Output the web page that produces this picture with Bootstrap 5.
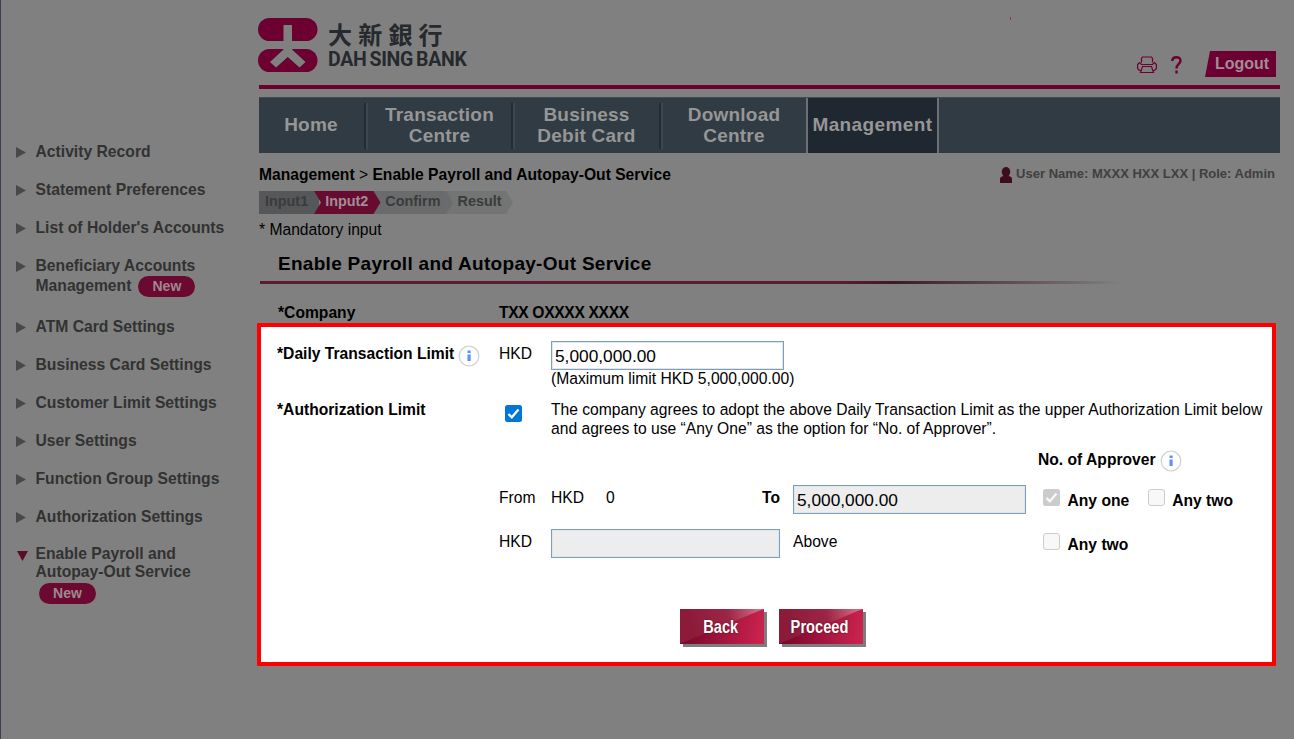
<!DOCTYPE html>
<html lang="en">
<head>
<meta charset="utf-8">
<meta name="viewport" content="width=device-width, initial-scale=1">
<title>Dah Sing Bank - Enable Payroll and Autopay-Out Service</title>
<link href="https://cdn.jsdelivr.net/npm/bootstrap@5.3.0/dist/css/bootstrap.min.css" rel="stylesheet">
<style>
body{background:#808080;font-family:"Liberation Sans","Noto Sans CJK TC",sans-serif;font-size:15.65px;line-height:20px;color:#000;height:739px;overflow:hidden}
.app-shell{height:739px;border-left:1px solid #3b4056}
.side{width:257px;padding-top:132px;color:#323232;font-weight:bold;font-size:15.7px}
.side-item{height:38px;padding:9.5px 0 0 15px;white-space:nowrap}
.side-item.tall{height:61px}
.side-item.last{line-height:18.5px;height:80px}
.tri{width:10px;height:11px;margin:5px 9.5px 0 0}
.tri.down{margin:6px 7.5px 0 1px;width:11px}
.pill-new{display:inline-block;width:57px;height:21px;border-radius:11px;background:#6b0930;color:#9c8a91;font-size:14px;line-height:21px;text-align:center}
.main-col{width:1036px;white-space:nowrap}
.top-head{height:85px;width:1022px}
.logo-text{padding:21px 0 0 10px}
.brand-zh{font-family:"Noto Sans CJK TC",sans-serif;font-size:24px;letter-spacing:6.2px;font-weight:700;color:#26292d;line-height:25px;height:28px}
.brand-en{font-family:Roboto,sans-serif;font-size:19.5px;font-weight:700;color:#26292d;line-height:22px;letter-spacing:-.3px;word-spacing:-1.5px}
.rule{height:4px;width:1021px;margin:0 0 8px 1px;background:#6c0031}
.menu{height:56px;width:1021px;margin-left:1px;background:#313b43;color:#969696;font-weight:bold;font-size:19px;letter-spacing:.22px;line-height:21px;border-top:1px solid #414b52}
.menu a{color:inherit;text-decoration:none;text-align:center;padding-bottom:1px}
.menu .one-line{padding-bottom:3px}
.sep{width:4px;height:46px;background:#222c35;border-right:2px solid #3d474f}
.menu .on{background:#1f2731;border-left:2px solid #6e7173;border-right:2px solid #6e7173;letter-spacing:.4px}
.logout{width:71px;height:26px;background:#6c0031;color:#a08e96;clip-path:polygon(5px 0,100% 0,100% 100%,0 100%);font-size:16px;font-weight:bold;line-height:25px;padding-left:10px}
.user{font-size:13px;font-weight:bold;color:#3f3f3f;line-height:18px}
.steps{position:relative;width:256px;height:23px;margin:6px 0 0 1px;font-size:14.4px;font-weight:bold;color:#3b3b3b;line-height:21px}
.steps .row-text{position:relative;padding-left:6px;gap:17px}
.page-title{font-size:19px;letter-spacing:.29px;line-height:24px;padding:12px 0 0 20px}
.title-rule{height:3px;width:880px;margin:5px 0 0 2px;background:linear-gradient(90deg,#5e1a35 0%,#5e1a35 66%,#3c1a26 72%,#808080 98%)}
.panel-box{width:1019px;height:343px;margin-left:-1px;border:4px solid #f00;border-radius:1px;background:#fff}
.grid-row{display:grid;grid-template-columns:222px 52px 242px 245px 1fr;padding-left:16px}
.fld{height:29px;border:1px solid #7f9db9;background:#fff;padding:0 3px;font-size:17.3px;line-height:28px;border-radius:0;width:233px;color:#000;outline:1px solid #dfe7ee;outline-offset:-2px}
.fld.off{background:#ededed}
.cb{width:17px;height:17px;border-radius:3px;border:1px solid #ccc;background:#f8f8f8;flex:none}
.info{width:22px;height:22px;margin:1px 0 0 4px}
.act{width:84px;height:35px;box-shadow:3px 3px 0 #7d7d80;background:linear-gradient(100deg,#760a29 10%,#a3163f 55%,#ce244f 100%);position:relative;color:#fff;font-weight:bold;font-size:19px;line-height:35px;text-align:center}
.act::before{content:"";position:absolute;inset:0;clip-path:polygon(0 0,100% 0,0 100%);background:linear-gradient(75deg,#8b1b39 15%,#9d2545 60%,#d97990 100%)}
.act span{position:relative;display:inline-block;transform:scaleX(.77);text-shadow:0 0 2px #601;margin:0 -10px 0 -12px}
</style>
</head>
<body>
<div class="app-shell d-flex">
<nav class="side">
<div class="side-item d-flex"><svg class="tri" viewBox="0 0 10 11"><path d="M0 0L10 5.5L0 11z" fill="#484848"/></svg><span>Activity Record</span></div>
<div class="side-item d-flex"><svg class="tri" viewBox="0 0 10 11"><path d="M0 0L10 5.5L0 11z" fill="#484848"/></svg><span>Statement Preferences</span></div>
<div class="side-item d-flex"><svg class="tri" viewBox="0 0 10 11"><path d="M0 0L10 5.5L0 11z" fill="#484848"/></svg><span>List of Holder's Accounts</span></div>
<div class="side-item tall d-flex"><svg class="tri" viewBox="0 0 10 11"><path d="M0 0L10 5.5L0 11z" fill="#484848"/></svg><div><span>Beneficiary Accounts</span><div class="d-flex"><span>Management</span><span class="pill-new" style="margin-left:7px">New</span></div></div></div>
<div class="side-item d-flex"><svg class="tri" viewBox="0 0 10 11"><path d="M0 0L10 5.5L0 11z" fill="#484848"/></svg><span>ATM Card Settings</span></div>
<div class="side-item d-flex"><svg class="tri" viewBox="0 0 10 11"><path d="M0 0L10 5.5L0 11z" fill="#484848"/></svg><span>Business Card Settings</span></div>
<div class="side-item d-flex"><svg class="tri" viewBox="0 0 10 11"><path d="M0 0L10 5.5L0 11z" fill="#484848"/></svg><span>Customer Limit Settings</span></div>
<div class="side-item d-flex"><svg class="tri" viewBox="0 0 10 11"><path d="M0 0L10 5.5L0 11z" fill="#484848"/></svg><span>User Settings</span></div>
<div class="side-item d-flex"><svg class="tri" viewBox="0 0 10 11"><path d="M0 0L10 5.5L0 11z" fill="#484848"/></svg><span>Function Group Settings</span></div>
<div class="side-item d-flex"><svg class="tri" viewBox="0 0 10 11"><path d="M0 0L10 5.5L0 11z" fill="#484848"/></svg><span>Authorization Settings</span></div>
<div class="side-item last d-flex"><svg class="tri down" viewBox="0 0 11 11"><path d="M0 0H11L5.500 10z" fill="#5a0d28"/></svg><div><span>Enable Payroll and</span><br><span>Autopay-Out Service</span><br><span class="pill-new" style="margin:1px 0 0 3.500px">New</span></div></div>
</nav>
<main class="main-col">
<header class="top-head d-flex justify-content-between">
<div class="d-flex">
<svg width="60" height="54" viewBox="0 0 60 54" style="margin-top:18px"><rect width="59.500" height="23" rx="11.500" fill="#6c0031"/><rect y="31" width="59.500" height="23" rx="11.500" fill="#6c0031"/><path d="M25.500 7h8.500v24.500l13.500 12.500-6 5.500-11.750-10.500-11.750 10.500-6-5.500 13.500-12.500z" fill="#808080"/></svg>
<div class="logo-text"><div class="brand-zh">大新銀行</div><div class="brand-en">DAH SING BANK</div></div>
</div>
<div class="d-flex position-relative" style="padding:51px 4px 0 0">
<i class="position-absolute" style="left:-127px;top:17px;width:1px;height:3px;background:#8f3f20"></i>
<svg width="20" height="18" viewBox="0 0 20 18" fill="none" stroke="#6c0031" stroke-width="1.200" style="margin-top:5px"><path d="M4.500 6.500V2.500L5.500 1H14.500L15.500 2.500V6.500M3.500 14.500H2.500L.6 12.500V8.500L2.500 6.500L4.500 8.500H15.500L17.500 6.500L19.400 8.500V12.500L17.500 14.500H16.500M5.500 10.500H14.500L16.500 16.500H3.500z"/></svg>
<svg width="12" height="18" viewBox="0 0 12 18" fill="none" stroke="#6c0031" stroke-width="2.400" style="margin:5px 22px 0 14px"><path d="M1.300 5C1.300 0 9.500 0 9.500 4.700C9.500 8 5.500 8 5.500 12.500M5.500 14.500V17.500"/></svg>
<div class="logout">Logout</div>
</div>
</header>
<div class="rule"></div>
<div class="menu d-flex align-items-center">
<a class="one-line" style="width:104px">Home</a><i class="sep ms-1" style="margin-left:1px!important"></i>
<a style="width:143px">Transaction<br>Centre</a><i class="sep"></i>
<a style="width:143px">Business<br>Debit Card</a><i class="sep" style="margin-left:1px"></i>
<a style="width:142px">Download<br>Centre</a>
<a class="on one-line h-100 d-flex align-items-center justify-content-center" style="width:133px;margin-left:1px">Management</a>
</div>
<div class="d-flex justify-content-between" style="width:1017px;height:32px;padding:12px 0 0 1px">
<div class="fw-bold">Management <span class="fw-normal">&gt;</span> Enable Payroll and Autopay-Out Service</div>
<div class="user d-flex"><svg width="12" height="16" viewBox="0 0 12 16" fill="#3e0c1c" style="margin:2px 4px 0 0"><ellipse cx="6" cy="4.800" rx="4.300" ry="4.800"/><path d="M3.500 7H8.500V9Q12 9.500 12 12V16H0V12Q0 9.500 3.500 9z"/></svg><span>User Name: MXXX HXX LXX | Role: Admin</span></div>
</div>
<div class="steps"><svg class="position-absolute top-0 start-0" width="256" height="23"><path d="M180 0H247L254 11.500 247 23H180z" fill="#737474"/><path d="M110 0H187L194 11.500 187 23H110z" fill="#696b6c"/><path d="M0 0H60V23H0z" fill="#565758"/><path d="M55 0H114.500L121.500 11.500 114.500 23H55L62 11.500z" fill="#670b31"/></svg><div class="row-text d-flex"><span>Input1</span><span style="color:#a08e96">Input2</span><span>Confirm</span><span>Result</span></div></div>
<div style="padding:6px 0 0 1px">* Mandatory input</div>
<h1 class="m-0 fw-bold page-title">Enable Payroll and Autopay-Out Service</h1>
<div class="title-rule"></div>
<div class="d-flex fw-bold" style="height:39px;padding:19px 0 0 20px"><div style="width:221px">*Company</div><span style="letter-spacing:-.35px">TXX OXXXX XXXX</span></div>
<section class="panel-box">
<div class="grid-row" style="height:73px;padding-top:14px">
<div class="d-flex fw-bold" style="padding-top:3px"><span>*Daily Transaction Limit</span><svg class="info" viewBox="0 0 22 22"><circle cx="11" cy="11" r="9.800" fill="#fff" stroke="#d2d2d2" stroke-width="1.300"/><path d="M9.500 5.500h3.200v2.500H9.500zM9.500 9.500h3.200v6.500H9.500z" fill="#5b93fa"/></svg></div>
<div style="padding-top:3px">HKD</div>
<div><div class="fld">5,000,000.00</div><div style="line-height:18px">(Maximum limit HKD 5,000,000.00)</div></div>
</div>
<div class="grid-row" style="height:49px">
<b>*Authorization Limit</b>
<svg width="17" height="17" viewBox="0 0 17 17" style="margin:5px 0 0 5.500px"><rect width="17" height="17" rx="2.500" fill="#0275d8"/><path d="M3.500 9L6.800 12.300L13.500 4.500" fill="none" stroke="#fff" stroke-width="2.300"/></svg>
<div style="line-height:18.500px;padding-top:1px">The company agrees to adopt the above Daily Transaction Limit as the upper Authorization Limit below<br>and agrees to use “Any One” as the option for “No. of Approver”.</div>
</div>
<div class="d-flex fw-bold" style="height:36px;padding-left:777px"><span style="padding-top:1px">No. of Approver</span><svg class="info" viewBox="0 0 22 22"><circle cx="11" cy="11" r="9.800" fill="#fff" stroke="#d2d2d2" stroke-width="1.300"/><path d="M9.500 5.500h3.200v2.500H9.500zM9.500 9.500h3.200v6.500H9.500z" fill="#5b93fa"/></svg></div>
<div class="grid-row" style="height:44px">
<div></div><div style="padding-top:3px">From</div>
<div class="d-flex" style="padding-top:3px"><span>HKD</span><span style="margin-left:22px">0</span><b class="ms-auto" style="margin-right:13px">To</b></div>
<div class="fld off">5,000,000.00</div>
<div class="d-flex fw-bold" style="padding:4px 0 0 5px"><svg width="17" height="17" viewBox="0 0 17 17"><rect width="17" height="17" rx="2.500" fill="#ccc"/><path d="M3.500 9L6.800 12.300L13.500 4.500" fill="none" stroke="#f8f8f8" stroke-width="2.300"/></svg><span style="margin:2px 19px 0 7.500px">Any one</span><i class="cb"></i><span style="margin:2px 0 0 7px">Any two</span></div>
</div>
<div class="grid-row" style="height:80px">
<div></div><div style="padding-top:3px">HKD</div><div class="fld off" style="width:229px"></div>
<div style="padding-top:3px">Above</div>
<div class="d-flex fw-bold" style="padding:4px 0 0 5px"><i class="cb"></i><span style="margin:2px 0 0 7.500px">Any two</span></div>
</div>
<div class="d-flex" style="gap:15px;padding-left:418.500px"><div class="act"><span>Back</span></div><div class="act"><span>Proceed</span></div></div>
</section>
</main>
</div>
<script src="https://cdn.jsdelivr.net/npm/bootstrap@5.3.0/dist/js/bootstrap.bundle.min.js"></script>
</body>
</html>
